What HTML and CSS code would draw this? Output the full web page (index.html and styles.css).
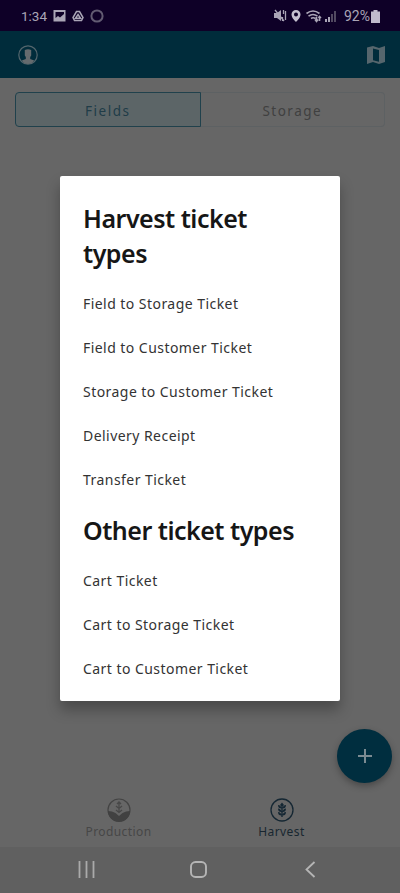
FILE: index.html
```html
<!DOCTYPE html>
<html lang="en">
<head>
    <meta charset="UTF-8">
    <meta name="viewport" content="width=device-width, initial-scale=1.0">
    <title>Harvest Tickets</title>
    <link rel="stylesheet" href="styles.css">
</head>
<body>
    <div class="status-bar">
        <span class="time">1:34</span>
        <svg width="52" height="14" viewBox="0 0 52 14">
            <path fill="#aaa5b6" fill-rule="evenodd" d="M0.500 1h12v11.500h-12zM2.500 3v6l2.500-2 2 1.500 4-3.500V3z"/>
            <path fill="none" stroke="#aaa5b6" stroke-width="1.500" d="M23.500 2.500h3l3.500 6-1.500 3h-7L20 8.500zM25 5.500l2.500 3.800h-5z"/>
            <circle cx="44" cy="7" r="5.600" fill="none" stroke="#625b72" stroke-width="2"/>
        </svg>
        <svg class="status-right" width="64" height="14" viewBox="0 0 64 14">
            <path fill="#aaa5b6" d="M0 4h3l4-3v11L3 9H0z"/>
            <path stroke="#aaa5b6" stroke-width="1.300" fill="none" d="M1 1l9 11M9.500 1v4M11.500 2v9M8.500 8v4"/>
            <path fill="#c5c0cf" fill-rule="evenodd" d="M22 1a4.500 4.500 0 0 0-4.500 4.500C17.500 9 22 13 22 13s4.500-4 4.500-7.500A4.500 4.500 0 0 0 22 1zM22 3.500a2 2 0 1 1 0 4 2 2 0 0 1 0-4z"/>
            <path stroke="#aaa5b6" stroke-width="1.600" fill="none" d="M32.500 4.500q6.500-5 13 0M34.500 7.200q4.500-3.500 9 0M37 9.500q2-1.500 4.500 0M42.500 8v4M41 10.500l1.500 2 1.500-2M45.500 12V8M44.500 9l1-1.500 1.500 1.500"/>
            <path fill="#aaa5b6" d="M51 10h2v3h-2zM54 8h2v5h-2z"/>
            <path fill="#514960" d="M57 5h2v8h-2zM60 2h2v11h-2z"/>
        </svg>
        <span class="battery-text">92%</span>
        <svg width="9" height="13" viewBox="0 0 9 13">
            <path fill="#bfbacb" d="M2.500 0h4v1.500H9V13H0V1.500h2.500z"/>
        </svg>
    </div>

    <header class="app-bar">
        <svg width="20" height="20" viewBox="0 0 20 20">
            <circle cx="10" cy="10" r="9.200" fill="none" stroke="#53666d" stroke-width="1.200"/>
            <path fill="#656b6e" d="M6.800 5q3.200-1.500 6.400 0v5.500l-1 1.500v2l4 1.500q-2.500 3.500-6.200 3.500t-6.200-3.500l4-1.500v-2l-1-1.500z"/>
        </svg>
        <svg width="18" height="18" viewBox="0 0 18 18">
            <path fill="#56666d" fill-rule="evenodd" d="M0 1.500L6 0l6 2 6-2v16l-6 2-6-2-6 2zM6 2.500v11.700l6 1.500V4z"/>
        </svg>
    </header>

    <main class="content">
        <div class="tabs">
            <div class="tab active">Fields</div>
            <div class="tab">Storage</div>
        </div>

        <div class="dialog">
            <h2>Harvest ticket types</h2>
            <ul>
                <li>Field to Storage Ticket</li>
                <li>Field to Customer Ticket</li>
                <li>Storage to Customer Ticket</li>
                <li>Delivery Receipt</li>
                <li>Transfer Ticket</li>
            </ul>
            <h2>Other ticket types</h2>
            <ul>
                <li>Cart Ticket</li>
                <li>Cart to Storage Ticket</li>
                <li>Cart to Customer Ticket</li>
            </ul>
        </div>
    </main>

    <nav class="bottom-nav">
        <div class="nav-item">
            <svg width="24" height="24" viewBox="0 0 24 24">
                <circle cx="12" cy="12" r="11" fill="none" stroke="#444" stroke-width="1.200"/>
                <path fill="#414141" d="M1 13q4 0 7.500 2l3.500 3 3.500-3q3.500-2 7.500-2a11 11 0 0 1-22 0z"/>
                <path fill="none" stroke="#484848" stroke-width="1.300" d="M12 5v10M9 8l3 2.500L15 8M9 12l3 2.500 3-2.500M10 6l2-2 2 2"/>
            </svg>
            <span>Production</span>
        </div>
        <div class="nav-item selected">
            <svg width="24" height="24" viewBox="0 0 24 24">
                <circle cx="12" cy="12" r="11" fill="none" stroke="#152733" stroke-width="1.300"/>
                <path fill="#152733" d="M12 4.500l2 2.500-2 2-2-2zM8 7q3 0 3.500 3.500Q8 10.500 8 7zM16 7q-3 0-3.500 3.500Q16 10.500 16 7zM8 10.500q3 0 3.500 3.500-3.500 0-3.500-3.500zM16 10.500q-3 0-3.500 3.500 3.500 0 3.500-3.500zM8 14q3 0 3.500 3.500Q8 17.500 8 14zM16 14q-3 0-3.500 3.500 3.500 0 3.500-3.500zM11.300 8h1.400v11h-1.400z"/>
            </svg>
            <span>Harvest</span>
        </div>
    </nav>

    <div class="system-nav">
        <svg width="17" height="18" viewBox="0 0 17 18">
            <path stroke="#aaa" stroke-width="1.800" d="M1.500 0v17M8.500 0v17M15.500 0v17"/>
        </svg>
        <svg width="17" height="18" viewBox="0 0 17 18">
            <rect x="1" y="1" width="15" height="15" rx="4.500" fill="none" stroke="#b5b5b5" stroke-width="1.900"/>
        </svg>
        <svg width="17" height="18" viewBox="0 0 17 18">
            <path d="M12.500 1L4.500 8.500l8 7.500" fill="none" stroke="#b5b5b5" stroke-width="1.800"/>
        </svg>
    </div>

    <div class="add-button">
        <svg width="14" height="14" viewBox="0 0 14 14">
            <path stroke="#7b8b92" stroke-width="2" d="M7 0v14M0 7h14"/>
        </svg>
    </div>
</body>
</html>
```
FILE: styles.css
```css
* {
    box-sizing: border-box;
}

body {
    font-family: "Noto Sans", sans-serif;
    background-color: #666666;
    width: 400px;
    height: 893px;
    margin: 0;
    display: flex;
    flex-direction: column;
    overflow: hidden;
}

svg {
    display: block;
    flex-shrink: 0;
}

.status-bar {
    height: 31px;
    padding: 1px 20px 0 21px;
    display: flex;
    align-items: center;
    background-color: #0e0027;
    color: #aaa5b6;
    font-family: Roboto, sans-serif;
    font-size: 13.5px;
}

.time {
    width: 32px;
}

.status-right {
    margin-left: auto;
}

.battery-text {
    font-size: 14px;
    margin: 0 1px 0 6px;
}

.app-bar {
    height: 47px;
    padding: 0 15px 0 18px;
    display: flex;
    justify-content: space-between;
    align-items: center;
    background-color: #002c3b;
}

.content {
    flex: 1;
    padding: 14px 15px 0;
}

.tabs {
    height: 35px;
    display: flex;
}

.tab {
    flex: 1;
    display: flex;
    justify-content: center;
    align-items: center;
    border: 1px solid #5d6163;
    border-left: none;
    border-radius: 0 4px 4px 0;
    color: #404040;
    font-size: 13.5px;
    letter-spacing: 1.5px;
    padding-top: 2px;
}

.tab.active {
    background-color: #5c6567;
    border: 1px solid #20414c;
    border-radius: 4px 0 0 4px;
    color: #203c47;
}

.dialog {
    width: 280px;
    height: 525px;
    margin: 49px auto 0;
    padding: 25px 23px 0;
    background-color: #ffffff;
    border-radius: 2px;
    box-shadow: 0 9px 14px rgba(0, 0, 0, 0.28);
}

.dialog h2 {
    width: 220px;
    margin: 0 0 11px;
    color: #161616;
    font-size: 25px;
    font-weight: 600;
    line-height: 35px;
    letter-spacing: -0.5px;
}

.dialog ul {
    list-style: none;
    margin: 0 0 12px;
    padding: 0;
}

.dialog li {
    height: 43.9px;
    line-height: 44px;
    color: #333333;
    font-size: 14px;
    letter-spacing: 0.45px;
    white-space: nowrap;
}

.bottom-nav {
    height: 57px;
    padding: 8px 37px 0;
    display: flex;
}

.nav-item {
    flex: 1;
    display: flex;
    flex-direction: column;
    align-items: center;
    color: #474747;
    font-size: 12px;
    line-height: 19px;
    letter-spacing: 0.4px;
}

.nav-item.selected {
    color: #182630;
}

.system-nav {
    height: 46px;
    padding: 0 81px 0 78px;
    display: flex;
    justify-content: space-between;
    align-items: center;
    background-color: #606060;
}

/* Floating button sits above the bottom nav */
.add-button {
    position: absolute;
    right: 8px;
    bottom: 110px;
    width: 55px;
    height: 54px;
    border-radius: 50%;
    display: flex;
    justify-content: center;
    align-items: center;
    background-color: #002e3f;
    box-shadow: 0 3px 7px rgba(0, 0, 0, 0.3);
}
```
